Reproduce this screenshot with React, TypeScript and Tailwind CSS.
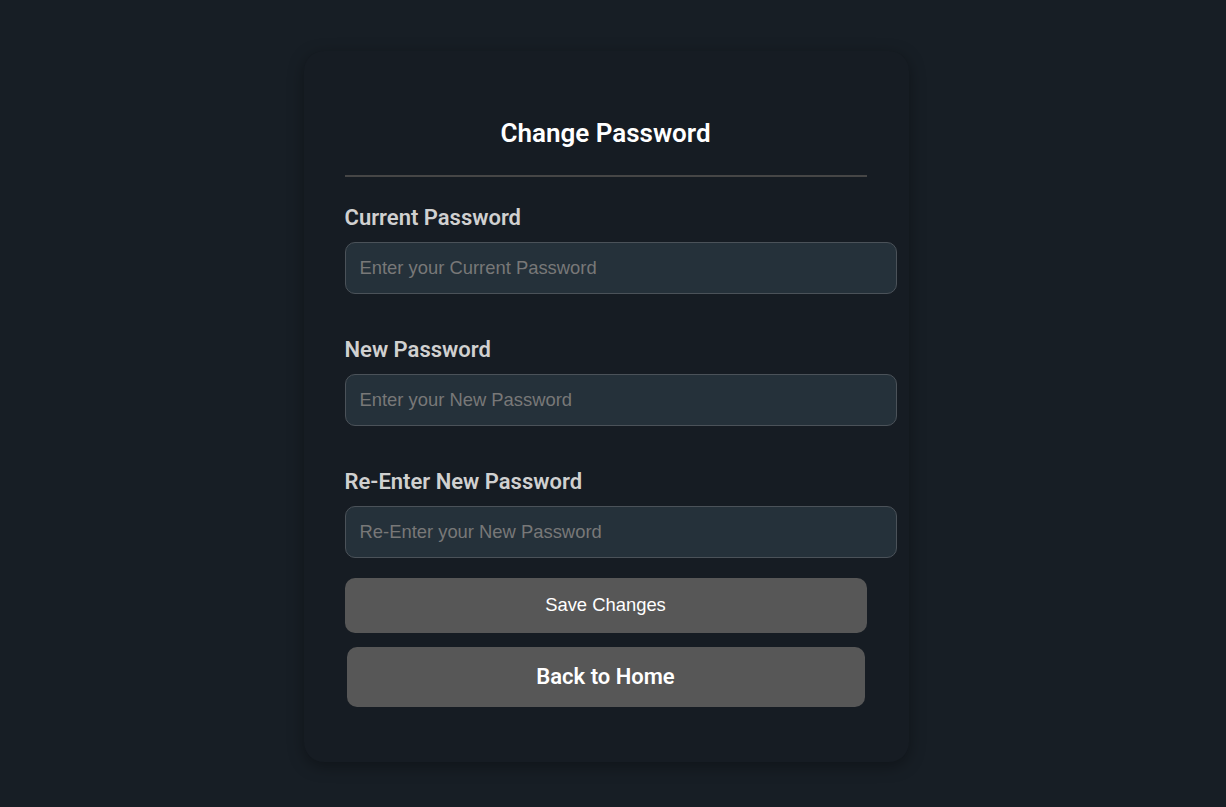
import React from "react";

export default function App() {
  const fields = [
    { label: "Current Password", ph: "Enter your Current Password" },
    { label: "New Password", ph: "Enter your New Password" },
    { label: "Re-Enter New Password", ph: "Re-Enter your New Password" },
  ];
  return (
    <div className="min-h-screen w-full bg-[#171e25] flex items-center justify-center pr-[14px] pt-[5px] font-['Roboto',sans-serif]">
      <div className="w-[605px] bg-[#161c23] rounded-[20px] shadow-[0_4px_16px_rgba(0,0,0,0.35)] pl-[41px] pr-[42px] pt-[66px] pb-[55px]">
        <h2 className="text-center text-white text-[26px] leading-[32px] font-semibold">Change Password</h2>
        <div className="mt-[26px] h-[2px] bg-[#464646]" />
        <div className="mt-[26px] flex flex-col">
          {fields.map((f, i) => (
            <div key={f.label} className={i > 0 ? "mt-[41px]" : ""}>
              <label className="block text-[22px] leading-[30px] font-semibold text-[#d0d0d0]">{f.label}</label>
              <input
                type="password"
                placeholder={f.ph}
                className="mt-[9px] block w-[552px] h-[52px] px-[14px] rounded-[10px] border border-[#4b5259] bg-[#25313a] text-[18.4px] text-white font-['Liberation_Sans',Arial,sans-serif] placeholder:text-[#787878] outline-none"
              />
            </div>
          ))}
        </div>
        <button className="mt-[20px] block w-full h-[55px] rounded-[10px] bg-[#575757] text-white text-[18.4px] font-['Liberation_Sans',Arial,sans-serif]">
          Save Changes
        </button>
        <button className="mt-[14px] mx-auto block w-[518px] h-[60px] rounded-[10px] bg-[#575757] text-white text-[22px] font-semibold">
          Back to Home
        </button>
      </div>
    </div>
  );
}
